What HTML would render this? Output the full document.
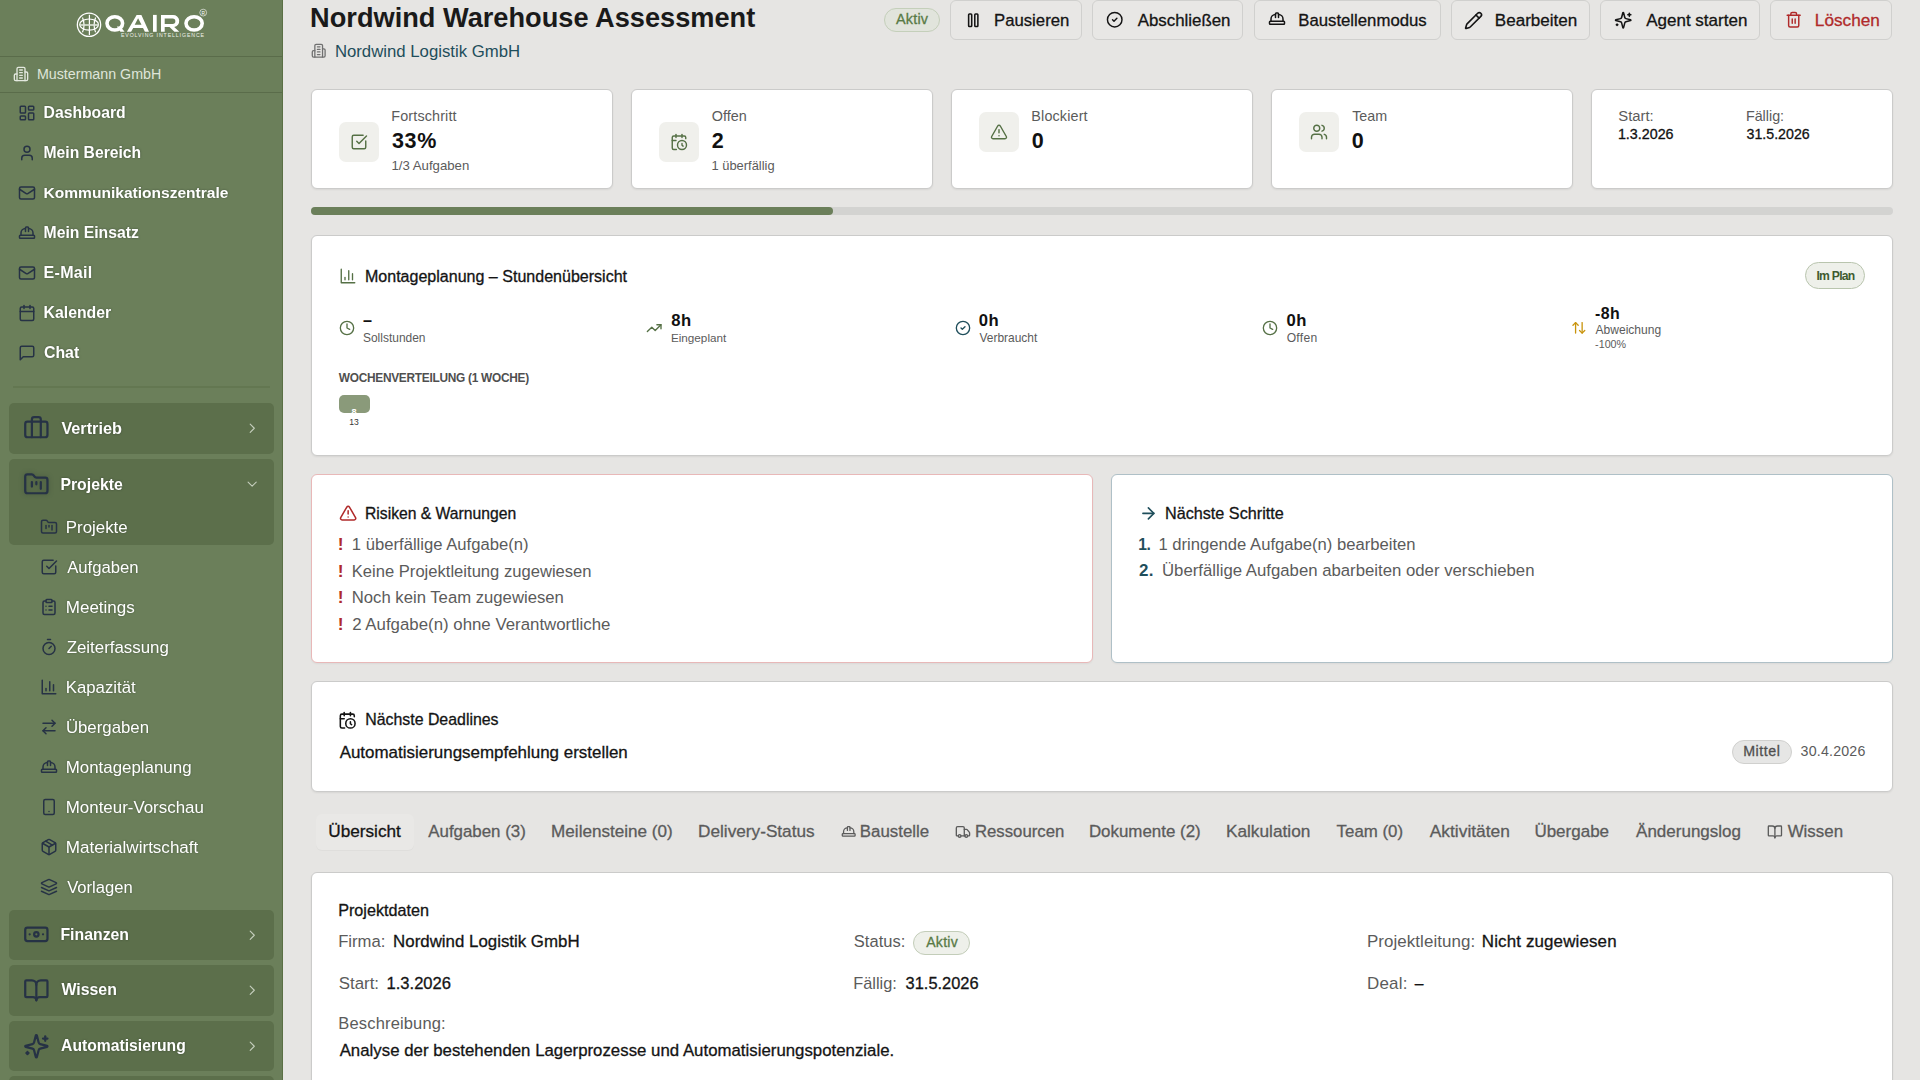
<!DOCTYPE html><html><head><meta charset="utf-8"><style>
html,body{margin:0;padding:0;width:1920px;height:1080px;overflow:hidden;background:#e6e5e3;font-family:"Liberation Sans",sans-serif;}
.t{position:absolute;white-space:nowrap;line-height:1;}
.b{position:absolute;box-sizing:border-box;}
.i{position:absolute;overflow:visible;}
</style></head><body>
<div class="b" style="left:0px;top:0px;width:283px;height:1080px;background:#6b7f5a;border-right:1px solid #5a7045;"></div>
<svg class="i" style="left:0;top:0" width="283" height="56" viewBox="0 0 283 56">
<g fill="none" stroke="#fff">
<circle cx="89" cy="24.7" r="11.65" stroke-width="1.3"/>
<ellipse cx="89.1" cy="24.6" rx="9.4" ry="5.6" stroke-width="1.2"/>
<path d="M89.4 14.8V35.1" stroke-width="1.2"/>
<path d="M82.5 17.4Q85.6 24.8 82.5 32.2" stroke-width="1.2"/>
<path d="M95.6 17.4Q92.6 24.8 95.6 32.2" stroke-width="1.2"/>
<path d="M79.6 25H98.8" stroke-width="1.6" stroke="#dfe5da"/>
</g>
<g fill="#fff">
<ellipse cx="114.8" cy="23.35" rx="7.8" ry="6.65" fill="none" stroke="#fff" stroke-width="3.6"/>
<path d="M116.8 26.6H120.4L124.6 31.8H120.4Z"/>
<path fill-rule="evenodd" d="M126.9 31.8L136.6 14.9H141.4L149 31.8H144.9L143 27.9H133.2L131.1 31.8ZM134.7 24.7H141.5L138.1 18.3Z"/>
<rect x="153" y="14.9" width="3.7" height="16.9"/>
<path fill-rule="evenodd" d="M161 31.8V14.9H172.9A6.1 6.1 0 0 1 174.2 27L179.3 31.8H174.4L169.5 27.1H164.7V31.8ZM164.7 18.5H172.6A2.75 2.75 0 0 1 172.6 24H164.7Z"/>
<ellipse cx="194.1" cy="23.35" rx="8.1" ry="6.65" fill="none" stroke="#fff" stroke-width="3.6"/>
</g>
<text x="120.9" y="36.9" font-family="Liberation Sans" font-size="5.2" fill="#eef2ea" textLength="83.1" lengthAdjust="spacing">EVOLVING INTELLIGENCE</text>
<circle cx="203.2" cy="12.6" r="3.4" fill="none" stroke="#fff" stroke-width="0.6"/>
<text x="201.5" y="14.5" font-family="Liberation Sans" font-size="4.8" fill="#fff">R</text>
</svg>
<div class="b" style="left:0px;top:56px;width:282px;height:1px;background:#5a6c4a;"></div>
<div class="b" style="left:0px;top:92px;width:282px;height:1px;background:#5a6c4a;"></div>
<svg class="i" style="left:13.00px;top:66.20px;" width="16.00" height="16.00" viewBox="0 0 24 24" fill="none" stroke="#e3e8de" stroke-width="2" stroke-linecap="round" stroke-linejoin="round"><path d="M6 22V4a2 2 0 0 1 2-2h8a2 2 0 0 1 2 2v18Z"/><path d="M6 12H4a2 2 0 0 0-2 2v6a2 2 0 0 0 2 2h2"/><path d="M18 9h2a2 2 0 0 1 2 2v9a2 2 0 0 1-2 2h-2"/><path d="M10 6h4"/><path d="M10 10h4"/><path d="M10 14h4"/><path d="M10 18h4"/></svg>
<svg class="i" style="left:17.50px;top:104.30px;" width="18.00" height="18.00" viewBox="0 0 24 24" fill="none" stroke="#263245" stroke-width="2" stroke-linecap="round" stroke-linejoin="round"><rect width="7" height="9" x="3" y="3" rx="1"/><rect width="7" height="5" x="14" y="3" rx="1"/><rect width="7" height="9" x="14" y="12" rx="1"/><rect width="7" height="5" x="3" y="16" rx="1"/></svg>
<svg class="i" style="left:17.50px;top:144.30px;" width="18.00" height="18.00" viewBox="0 0 24 24" fill="none" stroke="#263245" stroke-width="2" stroke-linecap="round" stroke-linejoin="round"><path d="M19 21v-2a4 4 0 0 0-4-4H9a4 4 0 0 0-4 4v2"/><circle cx="12" cy="7" r="4"/></svg>
<svg class="i" style="left:17.50px;top:184.30px;" width="18.00" height="18.00" viewBox="0 0 24 24" fill="none" stroke="#263245" stroke-width="2" stroke-linecap="round" stroke-linejoin="round"><rect width="20" height="16" x="2" y="4" rx="2"/><path d="m22 7-8.97 5.7a1.94 1.94 0 0 1-2.06 0L2 7"/></svg>
<svg class="i" style="left:17.50px;top:224.30px;" width="18.00" height="18.00" viewBox="0 0 24 24" fill="none" stroke="#263245" stroke-width="2" stroke-linecap="round" stroke-linejoin="round"><path d="M2 18a1 1 0 0 0 1 1h18a1 1 0 0 0 1-1v-2a1 1 0 0 0-1-1H3a1 1 0 0 0-1 1v2z"/><path d="M10 10V5a1 1 0 0 1 1-1h2a1 1 0 0 1 1 1v5"/><path d="M4 15v-3a6 6 0 0 1 6-6"/><path d="M14 6a6 6 0 0 1 6 6v3"/></svg>
<svg class="i" style="left:17.50px;top:264.30px;" width="18.00" height="18.00" viewBox="0 0 24 24" fill="none" stroke="#263245" stroke-width="2" stroke-linecap="round" stroke-linejoin="round"><rect width="20" height="16" x="2" y="4" rx="2"/><path d="m22 7-8.97 5.7a1.94 1.94 0 0 1-2.06 0L2 7"/></svg>
<svg class="i" style="left:17.50px;top:304.30px;" width="18.00" height="18.00" viewBox="0 0 24 24" fill="none" stroke="#263245" stroke-width="2" stroke-linecap="round" stroke-linejoin="round"><path d="M8 2v4"/><path d="M16 2v4"/><rect width="18" height="18" x="3" y="4" rx="2"/><path d="M3 10h18"/></svg>
<svg class="i" style="left:17.50px;top:344.30px;" width="18.00" height="18.00" viewBox="0 0 24 24" fill="none" stroke="#263245" stroke-width="2" stroke-linecap="round" stroke-linejoin="round"><path d="M21 15a2 2 0 0 1-2 2H7l-4 4V5a2 2 0 0 1 2-2h14a2 2 0 0 1 2 2z"/></svg>
<div class="b" style="left:13px;top:386px;width:257px;height:2px;background:#637751;"></div>
<div class="b" style="left:9px;top:403px;width:265px;height:50.5px;background:#5c6f4b;border-radius:5px;"></div>
<svg class="i" style="left:23.30px;top:414.95px;" width="26.70" height="26.70" viewBox="0 0 24 24" fill="none" stroke="#263245" stroke-width="2" stroke-linecap="round" stroke-linejoin="round"><path d="M16 20V4a2 2 0 0 0-2-2h-4a2 2 0 0 0-2 2v16"/><rect width="20" height="14" x="2" y="6" rx="2"/></svg>
<svg class="i" style="left:244.00px;top:420.05px;" width="16.50" height="16.50" viewBox="0 0 24 24" fill="none" stroke="#c5cebd" stroke-width="1.6" stroke-linecap="round" stroke-linejoin="round"><path d="m9 18 6-6-6-6"/></svg>
<div class="b" style="left:9px;top:459px;width:265px;height:50.4px;background:#5c6f4b;border-radius:5px 5px 0 0;"></div>
<svg class="i" style="left:23.30px;top:470.95px;filter:drop-shadow(0 0 2.5px rgba(40,55,45,.45));" width="26.70" height="26.70" viewBox="0 0 24 24" fill="none" stroke="#263245" stroke-width="2" stroke-linecap="round" stroke-linejoin="round"><path d="M4 20h16a2 2 0 0 0 2-2V8a2 2 0 0 0-2-2h-7.93a2 2 0 0 1-1.66-.9l-.82-1.2A2 2 0 0 0 7.93 3H4a2 2 0 0 0-2 2v13c0 1.1.9 2 2 2Z"/><path d="M8 10v4"/><path d="M12 10v2"/><path d="M16 10v6"/></svg>
<svg class="i" style="left:244.30px;top:475.90px;" width="16.30" height="16.30" viewBox="0 0 24 24" fill="none" stroke="#c5cebd" stroke-width="1.6" stroke-linecap="round" stroke-linejoin="round"><path d="m6 9 6 6 6-6"/></svg>
<div class="b" style="left:9px;top:509.4px;width:265px;height:35.3px;background:#5c6f4b;border-radius:0 0 5px 5px;"></div>
<svg class="i" style="left:40.00px;top:518.30px;" width="18.00" height="18.00" viewBox="0 0 24 24" fill="none" stroke="#263245" stroke-width="2" stroke-linecap="round" stroke-linejoin="round"><path d="M4 20h16a2 2 0 0 0 2-2V8a2 2 0 0 0-2-2h-7.93a2 2 0 0 1-1.66-.9l-.82-1.2A2 2 0 0 0 7.93 3H4a2 2 0 0 0-2 2v13c0 1.1.9 2 2 2Z"/><path d="M8 10v4"/><path d="M12 10v2"/><path d="M16 10v6"/></svg>
<svg class="i" style="left:40.00px;top:558.30px;" width="18.00" height="18.00" viewBox="0 0 24 24" fill="none" stroke="#263245" stroke-width="2" stroke-linecap="round" stroke-linejoin="round"><path d="M21 10.5V19a2 2 0 0 1-2 2H5a2 2 0 0 1-2-2V5a2 2 0 0 1 2-2h12.5"/><path d="m9 11 3 3L22 4"/></svg>
<svg class="i" style="left:40.00px;top:598.30px;" width="18.00" height="18.00" viewBox="0 0 24 24" fill="none" stroke="#263245" stroke-width="2" stroke-linecap="round" stroke-linejoin="round"><rect width="8" height="4" x="8" y="2" rx="1" ry="1"/><path d="M16 4h2a2 2 0 0 1 2 2v14a2 2 0 0 1-2 2H6a2 2 0 0 1-2-2V6a2 2 0 0 1 2-2h2"/><path d="M12 11h4"/><path d="M12 16h4"/><path d="M8 11h.01"/><path d="M8 16h.01"/></svg>
<svg class="i" style="left:40.00px;top:638.30px;" width="18.00" height="18.00" viewBox="0 0 24 24" fill="none" stroke="#263245" stroke-width="2" stroke-linecap="round" stroke-linejoin="round"><line x1="10" x2="14" y1="2" y2="2"/><line x1="12" x2="15" y1="14" y2="11"/><circle cx="12" cy="14" r="8"/></svg>
<svg class="i" style="left:40.00px;top:678.30px;" width="18.00" height="18.00" viewBox="0 0 24 24" fill="none" stroke="#263245" stroke-width="2" stroke-linecap="round" stroke-linejoin="round"><path d="M3 3v18h18"/><path d="M18 17V9"/><path d="M13 17V5"/><path d="M8 17v-3"/></svg>
<svg class="i" style="left:40.00px;top:718.30px;" width="18.00" height="18.00" viewBox="0 0 24 24" fill="none" stroke="#263245" stroke-width="2" stroke-linecap="round" stroke-linejoin="round"><path d="m16 3 4 4-4 4"/><path d="M20 7H4"/><path d="m8 21-4-4 4-4"/><path d="M4 17h16"/></svg>
<svg class="i" style="left:40.00px;top:758.30px;" width="18.00" height="18.00" viewBox="0 0 24 24" fill="none" stroke="#263245" stroke-width="2" stroke-linecap="round" stroke-linejoin="round"><path d="M2 18a1 1 0 0 0 1 1h18a1 1 0 0 0 1-1v-2a1 1 0 0 0-1-1H3a1 1 0 0 0-1 1v2z"/><path d="M10 10V5a1 1 0 0 1 1-1h2a1 1 0 0 1 1 1v5"/><path d="M4 15v-3a6 6 0 0 1 6-6"/><path d="M14 6a6 6 0 0 1 6 6v3"/></svg>
<svg class="i" style="left:40.00px;top:798.30px;" width="18.00" height="18.00" viewBox="0 0 24 24" fill="none" stroke="#263245" stroke-width="2" stroke-linecap="round" stroke-linejoin="round"><rect width="14" height="20" x="5" y="2" rx="2" ry="2"/><path d="M12 18h.01"/></svg>
<svg class="i" style="left:40.00px;top:838.30px;" width="18.00" height="18.00" viewBox="0 0 24 24" fill="none" stroke="#263245" stroke-width="2" stroke-linecap="round" stroke-linejoin="round"><path d="m7.5 4.27 9 5.15"/><path d="M21 8a2 2 0 0 0-1-1.73l-7-4a2 2 0 0 0-2 0l-7 4A2 2 0 0 0 3 8v8a2 2 0 0 0 1 1.73l7 4a2 2 0 0 0 2 0l7-4A2 2 0 0 0 21 16Z"/><path d="m3.3 7 8.7 5 8.7-5"/><path d="M12 22V12"/></svg>
<svg class="i" style="left:40.00px;top:878.30px;" width="18.00" height="18.00" viewBox="0 0 24 24" fill="none" stroke="#263245" stroke-width="2" stroke-linecap="round" stroke-linejoin="round"><path d="m12.83 2.18a2 2 0 0 0-1.66 0L2.6 6.08a1 1 0 0 0 0 1.83l8.58 3.91a2 2 0 0 0 1.66 0l8.58-3.9a1 1 0 0 0 0-1.83Z"/><path d="m22 17.65-9.17 4.16a2 2 0 0 1-1.66 0L2 17.65"/><path d="m22 12.65-9.17 4.16a2 2 0 0 1-1.66 0L2 12.65"/></svg>
<div class="b" style="left:9px;top:909.5px;width:265px;height:50.7px;background:#5c6f4b;border-radius:5px;"></div>
<svg class="i" style="left:23.30px;top:921.45px;" width="26.70" height="26.70" viewBox="0 0 24 24" fill="none" stroke="#263245" stroke-width="2" stroke-linecap="round" stroke-linejoin="round"><rect width="20" height="12" x="2" y="6" rx="2"/><circle cx="12" cy="12" r="2"/><path d="M6 12h.01M18 12h.01"/></svg>
<svg class="i" style="left:244.00px;top:926.55px;" width="16.50" height="16.50" viewBox="0 0 24 24" fill="none" stroke="#c5cebd" stroke-width="1.6" stroke-linecap="round" stroke-linejoin="round"><path d="m9 18 6-6-6-6"/></svg>
<div class="b" style="left:9px;top:965.3px;width:265px;height:50.5px;background:#5c6f4b;border-radius:5px;"></div>
<svg class="i" style="left:23.30px;top:977.25px;" width="26.70" height="26.70" viewBox="0 0 24 24" fill="none" stroke="#263245" stroke-width="2" stroke-linecap="round" stroke-linejoin="round"><path d="M12 7v14"/><path d="M3 18a1 1 0 0 1-1-1V4a1 1 0 0 1 1-1h5a4 4 0 0 1 4 4 4 4 0 0 1 4-4h5a1 1 0 0 1 1 1v13a1 1 0 0 1-1 1h-6a3 3 0 0 0-3 3 3 3 0 0 0-3-3z"/></svg>
<svg class="i" style="left:244.00px;top:982.35px;" width="16.50" height="16.50" viewBox="0 0 24 24" fill="none" stroke="#c5cebd" stroke-width="1.6" stroke-linecap="round" stroke-linejoin="round"><path d="m9 18 6-6-6-6"/></svg>
<div class="b" style="left:9px;top:1020.9px;width:265px;height:50.3px;background:#5c6f4b;border-radius:5px;"></div>
<svg class="i" style="left:23.30px;top:1032.85px;" width="26.70" height="26.70" viewBox="0 0 24 24" fill="none" stroke="#263245" stroke-width="2" stroke-linecap="round" stroke-linejoin="round"><path d="M9.937 15.5A2 2 0 0 0 8.5 14.063l-6.135-1.582a.5.5 0 0 1 0-.962L8.5 9.936A2 2 0 0 0 9.937 8.5l1.582-6.135a.5.5 0 0 1 .963 0L14.063 8.5A2 2 0 0 0 15.5 9.937l6.135 1.581a.5.5 0 0 1 0 .964L15.5 14.063a2 2 0 0 0-1.437 1.437l-1.582 6.135a.5.5 0 0 1-.963 0z"/><path d="M20 3v4"/><path d="M22 5h-4"/><path d="M4 17v2"/><path d="M5 18H3"/></svg>
<svg class="i" style="left:244.00px;top:1037.95px;" width="16.50" height="16.50" viewBox="0 0 24 24" fill="none" stroke="#c5cebd" stroke-width="1.6" stroke-linecap="round" stroke-linejoin="round"><path d="m9 18 6-6-6-6"/></svg>
<div class="b" style="left:9px;top:1076.3px;width:265px;height:30px;background:#5c6f4b;border-radius:5px;"></div>
<svg class="i" style="left:311.25px;top:43.10px;" width="15.40" height="15.40" viewBox="0 0 24 24" fill="none" stroke="#707070" stroke-width="2" stroke-linecap="round" stroke-linejoin="round"><path d="M6 22V4a2 2 0 0 1 2-2h8a2 2 0 0 1 2 2v18Z"/><path d="M6 12H4a2 2 0 0 0-2 2v6a2 2 0 0 0 2 2h2"/><path d="M18 9h2a2 2 0 0 1 2 2v9a2 2 0 0 1-2 2h-2"/><path d="M10 6h4"/><path d="M10 10h4"/><path d="M10 14h4"/><path d="M10 18h4"/></svg>
<div class="b" style="left:884px;top:8px;width:56px;height:24px;background:#e1e4dc;border:1px solid #c4cfba;border-radius:12px;"></div>
<div class="b" style="left:950px;top:0px;width:132px;height:40px;background:#e8e7e5;border:1px solid #d0d0ce;border-radius:6px;"></div>
<svg class="i" style="left:963.64px;top:10.59px;" width="18.51" height="18.51" viewBox="0 0 24 24" fill="none" stroke="#141414" stroke-width="2" stroke-linecap="round" stroke-linejoin="round"><rect x="14" y="4" width="4" height="16" rx="1"/><rect x="6" y="4" width="4" height="16" rx="1"/></svg>
<div class="b" style="left:1092px;top:0px;width:151px;height:40px;background:#e8e7e5;border:1px solid #d0d0ce;border-radius:6px;"></div>
<svg class="i" style="left:1106.27px;top:11.27px;" width="17.45" height="17.45" viewBox="0 0 24 24" fill="none" stroke="#141414" stroke-width="2" stroke-linecap="round" stroke-linejoin="round"><circle cx="12" cy="12" r="10"/><path d="m9 12 2 2 4-4"/></svg>
<div class="b" style="left:1254px;top:0px;width:187px;height:40px;background:#e8e7e5;border:1px solid #d0d0ce;border-radius:6px;"></div>
<svg class="i" style="left:1267.65px;top:10.25px;" width="18.00" height="18.00" viewBox="0 0 24 24" fill="none" stroke="#141414" stroke-width="2" stroke-linecap="round" stroke-linejoin="round"><path d="M2 18a1 1 0 0 0 1 1h18a1 1 0 0 0 1-1v-2a1 1 0 0 0-1-1H3a1 1 0 0 0-1 1v2z"/><path d="M10 10V5a1 1 0 0 1 1-1h2a1 1 0 0 1 1 1v5"/><path d="M4 15v-3a6 6 0 0 1 6-6"/><path d="M14 6a6 6 0 0 1 6 6v3"/></svg>
<div class="b" style="left:1451px;top:0px;width:139px;height:40px;background:#e8e7e5;border:1px solid #d0d0ce;border-radius:6px;"></div>
<svg class="i" style="left:1464.20px;top:11.20px;" width="19.09" height="19.09" viewBox="0 0 24 24" fill="none" stroke="#141414" stroke-width="2" stroke-linecap="round" stroke-linejoin="round"><path d="M21.174 6.812a1 1 0 0 0-3.986-3.987L3.842 16.174a2 2 0 0 0-.5.83l-1.321 4.352a.5.5 0 0 0 .623.622l4.353-1.32a2 2 0 0 0 .83-.497z"/><path d="m15 5 4 4"/></svg>
<div class="b" style="left:1600px;top:0px;width:160px;height:40px;background:#e8e7e5;border:1px solid #d0d0ce;border-radius:6px;"></div>
<svg class="i" style="left:1614.05px;top:10.90px;" width="18.42" height="18.42" viewBox="0 0 24 24" fill="none" stroke="#141414" stroke-width="2" stroke-linecap="round" stroke-linejoin="round"><path d="M9.937 15.5A2 2 0 0 0 8.5 14.063l-6.135-1.582a.5.5 0 0 1 0-.962L8.5 9.936A2 2 0 0 0 9.937 8.5l1.582-6.135a.5.5 0 0 1 .963 0L14.063 8.5A2 2 0 0 0 15.5 9.937l6.135 1.581a.5.5 0 0 1 0 .964L15.5 14.063a2 2 0 0 0-1.437 1.437l-1.582 6.135a.5.5 0 0 1-.963 0z"/><path d="M20 3v4"/><path d="M22 5h-4"/><path d="M4 17v2"/><path d="M5 18H3"/></svg>
<div class="b" style="left:1770px;top:0px;width:122px;height:40px;background:#e8e7e5;border:1px solid #d0d0ce;border-radius:6px;"></div>
<svg class="i" style="left:1784.55px;top:11.28px;" width="17.40" height="17.40" viewBox="0 0 24 24" fill="none" stroke="#b02a2a" stroke-width="2" stroke-linecap="round" stroke-linejoin="round"><path d="M3 6h18"/><path d="M19 6v14c0 1-1 2-2 2H7c-1 0-2-1-2-2V6"/><path d="M8 6V4c0-1 1-2 2-2h4c1 0 2 1 2 2v2"/><line x1="10" x2="10" y1="11" y2="17"/><line x1="14" x2="14" y1="11" y2="17"/></svg>
<div class="b" style="left:311px;top:89px;width:302px;height:100px;background:#fff;border:1px solid #cbcbca;border-radius:6px;box-shadow:0 1px 2px rgba(0,0,0,.07);"></div>
<div class="b" style="left:339px;top:122px;width:40px;height:40px;background:#f0f0ec;border-radius:7px;"></div>
<svg class="i" style="left:350.00px;top:132.60px;" width="18.00" height="18.00" viewBox="0 0 24 24" fill="none" stroke="#557045" stroke-width="1.9" stroke-linecap="round" stroke-linejoin="round"><path d="M21 10.5V19a2 2 0 0 1-2 2H5a2 2 0 0 1-2-2V5a2 2 0 0 1 2-2h12.5"/><path d="m9 11 3 3L22 4"/></svg>
<div class="b" style="left:631px;top:89px;width:302px;height:100px;background:#fff;border:1px solid #cbcbca;border-radius:6px;box-shadow:0 1px 2px rgba(0,0,0,.07);"></div>
<div class="b" style="left:659px;top:122px;width:40px;height:40px;background:#f0f0ec;border-radius:7px;"></div>
<svg class="i" style="left:670.00px;top:132.60px;" width="18.00" height="18.00" viewBox="0 0 24 24" fill="none" stroke="#557045" stroke-width="1.9" stroke-linecap="round" stroke-linejoin="round"><path d="M21 7.5V6a2 2 0 0 0-2-2H5a2 2 0 0 0-2 2v14a2 2 0 0 0 2 2h3.5"/><path d="M16 2v4"/><path d="M8 2v4"/><path d="M3 10h5"/><path d="M17.5 17.5 16 16.3V14"/><circle cx="16" cy="16" r="6"/></svg>
<div class="b" style="left:951px;top:89px;width:302px;height:100px;background:#fff;border:1px solid #cbcbca;border-radius:6px;box-shadow:0 1px 2px rgba(0,0,0,.07);"></div>
<div class="b" style="left:979px;top:112px;width:40px;height:40px;background:#f0f0ec;border-radius:7px;"></div>
<svg class="i" style="left:990.00px;top:122.60px;" width="18.00" height="18.00" viewBox="0 0 24 24" fill="none" stroke="#557045" stroke-width="1.9" stroke-linecap="round" stroke-linejoin="round"><path d="m21.73 18-8-14a2 2 0 0 0-3.48 0l-8 14A2 2 0 0 0 4 21h16a2 2 0 0 0 1.73-3"/><path d="M12 9v4"/><path d="M12 17h.01"/></svg>
<div class="b" style="left:1271px;top:89px;width:302px;height:100px;background:#fff;border:1px solid #cbcbca;border-radius:6px;box-shadow:0 1px 2px rgba(0,0,0,.07);"></div>
<div class="b" style="left:1299px;top:112px;width:40px;height:40px;background:#f0f0ec;border-radius:7px;"></div>
<svg class="i" style="left:1310.00px;top:122.60px;" width="18.00" height="18.00" viewBox="0 0 24 24" fill="none" stroke="#557045" stroke-width="1.9" stroke-linecap="round" stroke-linejoin="round"><path d="M16 21v-2a4 4 0 0 0-4-4H6a4 4 0 0 0-4 4v2"/><circle cx="9" cy="7" r="4"/><path d="M22 21v-2a4 4 0 0 0-3-3.87"/><path d="M16 3.13a4 4 0 0 1 0 7.75"/></svg>
<div class="b" style="left:1591px;top:89px;width:302px;height:100px;background:#fff;border:1px solid #cbcbca;border-radius:6px;box-shadow:0 1px 2px rgba(0,0,0,.07);"></div>
<div class="b" style="left:311px;top:207px;width:1582px;height:8px;background:#d3d3d1;border-radius:4px;"></div>
<div class="b" style="left:311px;top:207px;width:522px;height:8px;background:#6b7f5a;border-radius:4px;"></div>
<div class="b" style="left:311px;top:235px;width:1582px;height:221px;background:#fff;border:1px solid #cbcbca;border-radius:6px;box-shadow:0 1px 2px rgba(0,0,0,.07);"></div>
<svg class="i" style="left:338.60px;top:266.90px;" width="18.00" height="18.00" viewBox="0 0 24 24" fill="none" stroke="#557045" stroke-width="1.8" stroke-linecap="round" stroke-linejoin="round"><path d="M3 3v18h18"/><path d="M18 17V9"/><path d="M13 17V5"/><path d="M8 17v-3"/></svg>
<div class="b" style="left:1804.5px;top:261.7px;width:60.4px;height:27.8px;background:#eef0ea;border:1px solid #b9c5ae;border-radius:14px;"></div>
<svg class="i" style="left:338.53px;top:320.30px;" width="16.00" height="16.00" viewBox="0 0 24 24" fill="none" stroke="#557045" stroke-width="2" stroke-linecap="round" stroke-linejoin="round"><circle cx="12" cy="12" r="10"/><polyline points="12 6 12 12 16 14"/></svg>
<svg class="i" style="left:646.32px;top:319.91px;" width="16.36" height="16.36" viewBox="0 0 24 24" fill="none" stroke="#557045" stroke-width="2" stroke-linecap="round" stroke-linejoin="round"><polyline points="22 7 13.5 15.5 8.5 10.5 2 17"/><polyline points="16 7 22 7 22 13"/></svg>
<svg class="i" style="left:954.83px;top:320.30px;" width="16.00" height="16.00" viewBox="0 0 24 24" fill="none" stroke="#1f4e5b" stroke-width="2" stroke-linecap="round" stroke-linejoin="round"><circle cx="12" cy="12" r="10"/><path d="m9 12 2 2 4-4"/></svg>
<svg class="i" style="left:1262.43px;top:320.30px;" width="16.00" height="16.00" viewBox="0 0 24 24" fill="none" stroke="#557045" stroke-width="2" stroke-linecap="round" stroke-linejoin="round"><circle cx="12" cy="12" r="10"/><polyline points="12 6 12 12 16 14"/></svg>
<svg class="i" style="left:1570.89px;top:319.94px;" width="15.72" height="15.72" viewBox="0 0 24 24" fill="none" stroke="#c9940c" stroke-width="2" stroke-linecap="round" stroke-linejoin="round"><path d="m21 16-4 4-4-4"/><path d="M17 20V4"/><path d="m3 8 4-4 4 4"/><path d="M7 4v16"/></svg>
<div class="b" style="left:339px;top:395px;width:31px;height:18px;background:#8a9a7a;border-radius:5px;"></div>
<div class="b" style="left:311px;top:474px;width:782px;height:189px;background:#fff;border:1px solid #e8b8b8;border-radius:6px;box-shadow:0 1px 2px rgba(0,0,0,.05);"></div>
<svg class="i" style="left:338.51px;top:504.05px;" width="18.28" height="18.28" viewBox="0 0 24 24" fill="none" stroke="#b02a2a" stroke-width="2" stroke-linecap="round" stroke-linejoin="round"><path d="m21.73 18-8-14a2 2 0 0 0-3.48 0l-8 14A2 2 0 0 0 4 21h16a2 2 0 0 0 1.73-3"/><path d="M12 9v4"/><path d="M12 17h.01"/></svg>
<div class="b" style="left:1111px;top:474px;width:782px;height:189px;background:#fff;border:1px solid #afc0c7;border-radius:6px;box-shadow:0 1px 2px rgba(0,0,0,.05);"></div>
<svg class="i" style="left:1138.58px;top:504.38px;" width="18.75" height="18.75" viewBox="0 0 24 24" fill="none" stroke="#1f4e5b" stroke-width="2" stroke-linecap="round" stroke-linejoin="round"><path d="M5 12h14"/><path d="m12 5 7 7-7 7"/></svg>
<div class="b" style="left:311px;top:681px;width:1582px;height:111px;background:#fff;border:1px solid #cbcbca;border-radius:6px;box-shadow:0 1px 2px rgba(0,0,0,.07);"></div>
<svg class="i" style="left:338.15px;top:710.82px;" width="18.63" height="18.63" viewBox="0 0 24 24" fill="none" stroke="#141414" stroke-width="2" stroke-linecap="round" stroke-linejoin="round"><path d="M21 7.5V6a2 2 0 0 0-2-2H5a2 2 0 0 0-2 2v14a2 2 0 0 0 2 2h3.5"/><path d="M16 2v4"/><path d="M8 2v4"/><path d="M3 10h5"/><path d="M17.5 17.5 16 16.3V14"/><circle cx="16" cy="16" r="6"/></svg>
<div class="b" style="left:1732px;top:739.7px;width:59.7px;height:24px;background:#e6e6e5;border:1px solid #d0d0ce;border-radius:12px;"></div>
<div class="b" style="left:315.8px;top:814.2px;width:98.6px;height:35.4px;background:#e9e8e6;border-radius:6px;box-shadow:0 1px 1px rgba(0,0,0,.03);"></div>
<svg class="i" style="left:841.06px;top:823.68px;" width="15.38" height="15.38" viewBox="0 0 24 24" fill="none" stroke="#5b5b5b" stroke-width="2" stroke-linecap="round" stroke-linejoin="round"><path d="M2 18a1 1 0 0 0 1 1h18a1 1 0 0 0 1-1v-2a1 1 0 0 0-1-1H3a1 1 0 0 0-1 1v2z"/><path d="M10 10V5a1 1 0 0 1 1-1h2a1 1 0 0 1 1 1v5"/><path d="M4 15v-3a6 6 0 0 1 6-6"/><path d="M14 6a6 6 0 0 1 6 6v3"/></svg>
<svg class="i" style="left:954.74px;top:823.81px;" width="15.93" height="15.93" viewBox="0 0 24 24" fill="none" stroke="#5b5b5b" stroke-width="2" stroke-linecap="round" stroke-linejoin="round"><path d="M14 18V6a2 2 0 0 0-2-2H4a2 2 0 0 0-2 2v11a1 1 0 0 0 1 1h2"/><path d="M15 18H9"/><path d="M19 18h2a1 1 0 0 0 1-1v-3.65a1 1 0 0 0-.22-.624l-3.48-4.35A1 1 0 0 0 17.52 8H14"/><circle cx="17" cy="18" r="2"/><circle cx="7" cy="18" r="2"/></svg>
<svg class="i" style="left:1767.04px;top:823.68px;" width="15.82" height="15.82" viewBox="0 0 24 24" fill="none" stroke="#5b5b5b" stroke-width="2" stroke-linecap="round" stroke-linejoin="round"><path d="M12 7v14"/><path d="M3 18a1 1 0 0 1-1-1V4a1 1 0 0 1 1-1h5a4 4 0 0 1 4 4 4 4 0 0 1 4-4h5a1 1 0 0 1 1 1v13a1 1 0 0 1-1 1h-6a3 3 0 0 0-3 3 3 3 0 0 0-3-3z"/></svg>
<div class="b" style="left:311px;top:872px;width:1582px;height:260px;background:#fff;border:1px solid #cbcbca;border-radius:6px;box-shadow:0 1px 2px rgba(0,0,0,.07);"></div>
<div class="b" style="left:913.3px;top:930.8px;width:56.7px;height:23.8px;background:#eef0ea;border:1px solid #c3cdb9;border-radius:12px;"></div>
<svg class="i" style="left:0;top:0" width="1920" height="1080" font-family="Liberation Sans"><text x="36.93" y="79.00" font-size="14.25" fill="#dfe5d9">Mustermann GmbH</text>
<text x="43.55" y="118.00" font-size="15.72" fill="#fff" font-weight="bold" style="filter:drop-shadow(0 0 1px rgba(30,40,30,.5));">Dashboard</text>
<text x="43.55" y="158.00" font-size="15.68" fill="#fff" font-weight="bold" style="filter:drop-shadow(0 0 1px rgba(30,40,30,.5));">Mein Bereich</text>
<text x="43.56" y="198.00" font-size="15.56" fill="#fff" font-weight="bold" style="filter:drop-shadow(0 0 1px rgba(30,40,30,.5));">Kommunikationszentrale</text>
<text x="43.55" y="238.00" font-size="15.72" fill="#fff" font-weight="bold" style="filter:drop-shadow(0 0 1px rgba(30,40,30,.5));">Mein Einsatz</text>
<text x="43.53" y="278.00" font-size="16.05" fill="#fff" letter-spacing="0.311" font-weight="bold" style="filter:drop-shadow(0 0 1px rgba(30,40,30,.5));">E-Mail</text>
<text x="43.54" y="318.00" font-size="15.82" fill="#fff" font-weight="bold" style="filter:drop-shadow(0 0 1px rgba(30,40,30,.5));">Kalender</text>
<text x="43.95" y="358.00" font-size="15.86" fill="#fff" font-weight="bold" style="filter:drop-shadow(0 0 1px rgba(30,40,30,.5));">Chat</text>
<text x="61.39" y="434.30" font-size="16.24" fill="#fff" font-weight="bold" style="filter:drop-shadow(0 0 1px rgba(30,40,30,.5));">Vertrieb</text>
<text x="60.44" y="489.80" font-size="15.79" fill="#fff" font-weight="bold" style="filter:drop-shadow(0 0 1px rgba(30,40,30,.5));">Projekte</text>
<text x="65.82" y="532.80" font-size="16.85" fill="#fff" style="filter:drop-shadow(0 0 0.8px rgba(30,40,30,.4));">Projekte</text>
<text x="67.17" y="572.80" font-size="16.70" fill="#fff" style="filter:drop-shadow(0 0 0.8px rgba(30,40,30,.4));">Aufgaben</text>
<text x="65.80" y="612.80" font-size="17.01" fill="#fff" style="filter:drop-shadow(0 0 0.8px rgba(30,40,30,.4));">Meetings</text>
<text x="66.67" y="652.80" font-size="16.86" fill="#fff" style="filter:drop-shadow(0 0 0.8px rgba(30,40,30,.4));">Zeiterfassung</text>
<text x="65.82" y="692.80" font-size="16.76" fill="#fff" style="filter:drop-shadow(0 0 0.8px rgba(30,40,30,.4));">Kapazität</text>
<text x="65.90" y="732.80" font-size="16.81" fill="#fff" style="filter:drop-shadow(0 0 0.8px rgba(30,40,30,.4));">Übergaben</text>
<text x="65.81" y="772.80" font-size="16.89" fill="#fff" style="filter:drop-shadow(0 0 0.8px rgba(30,40,30,.4));">Montageplanung</text>
<text x="65.81" y="812.80" font-size="16.90" fill="#fff" style="filter:drop-shadow(0 0 0.8px rgba(30,40,30,.4));">Monteur-Vorschau</text>
<text x="65.80" y="852.80" font-size="17.05" fill="#fff" style="filter:drop-shadow(0 0 0.8px rgba(30,40,30,.4));">Materialwirtschaft</text>
<text x="67.13" y="892.80" font-size="16.63" fill="#fff" style="filter:drop-shadow(0 0 0.8px rgba(30,40,30,.4));">Vorlagen</text>
<text x="60.44" y="940.40" font-size="15.84" fill="#fff" font-weight="bold" style="filter:drop-shadow(0 0 1px rgba(30,40,30,.5));">Finanzen</text>
<text x="61.48" y="995.40" font-size="15.86" fill="#fff" font-weight="bold" style="filter:drop-shadow(0 0 1px rgba(30,40,30,.5));">Wissen</text>
<text x="61.11" y="1051.40" font-size="15.69" fill="#fff" font-weight="bold" style="filter:drop-shadow(0 0 1px rgba(30,40,30,.5));">Automatisierung</text>
<text x="310.08" y="26.90" font-size="27.19" fill="#1a1a1a" font-weight="bold">Nordwind Warehouse Assessment</text>
<text x="334.88" y="56.90" font-size="16.75" fill="#1f4e5b">Nordwind Logistik GmbH</text>
<text x="895.97" y="24.00" font-size="14.38" fill="#587a45" letter-spacing="0.228" stroke="#587a45" stroke-width="0.3">Aktiv</text>
<text x="994.03" y="25.60" font-size="16.73" fill="#141414" stroke="#141414" stroke-width="0.3">Pausieren</text>
<text x="1137.67" y="25.60" font-size="16.87" fill="#141414" stroke="#141414" stroke-width="0.3">Abschließen</text>
<text x="1298.23" y="25.60" font-size="16.76" fill="#141414" stroke="#141414" stroke-width="0.3">Baustellenmodus</text>
<text x="1494.85" y="25.60" font-size="17.06" fill="#141414" stroke="#141414" stroke-width="0.3">Bearbeiten</text>
<text x="1646.22" y="25.60" font-size="17.00" fill="#141414" stroke="#141414" stroke-width="0.3">Agent starten</text>
<text x="1814.84" y="25.60" font-size="17.20" fill="#b02a2a" stroke="#b02a2a" stroke-width="0.3">Löschen</text>
<text x="391.32" y="120.80" font-size="14.38" fill="#5b5b5b" letter-spacing="0.136">Fortschritt</text>
<text x="392.01" y="147.90" font-size="21.50" fill="#111" letter-spacing="0.645" font-weight="bold">33%</text>
<text x="391.49" y="169.70" font-size="13.21" fill="#5b5b5b">1/3 Aufgaben</text>
<text x="711.82" y="120.80" font-size="14.38" fill="#5b5b5b">Offen</text>
<text x="711.75" y="147.90" font-size="21.50" fill="#111" font-weight="bold">2</text>
<text x="711.52" y="169.70" font-size="12.90" fill="#5b5b5b">1 überfällig</text>
<text x="1031.32" y="120.80" font-size="14.38" fill="#5b5b5b" letter-spacing="0.142">Blockiert</text>
<text x="1031.65" y="147.90" font-size="21.50" fill="#111" font-weight="bold">0</text>
<text x="1352.18" y="120.80" font-size="14.30" fill="#5b5b5b">Team</text>
<text x="1351.65" y="147.90" font-size="21.50" fill="#111" font-weight="bold">0</text>
<text x="1618.33" y="120.90" font-size="14.82" fill="#5b5b5b">Start:</text>
<text x="1617.91" y="139.00" font-size="14.31" fill="#111" stroke="#111" stroke-width="0.3">1.3.2026</text>
<text x="1745.93" y="120.90" font-size="14.31" fill="#5b5b5b">Fällig:</text>
<text x="1746.56" y="139.00" font-size="14.20" fill="#111" stroke="#111" stroke-width="0.3">31.5.2026</text>
<text x="364.98" y="281.70" font-size="16.04" fill="#141414" stroke="#141414" stroke-width="0.3">Montageplanung – Stundenübersicht</text>
<text x="1816.39" y="280.30" font-size="12.16" fill="#3f5b30" letter-spacing="-0.729" font-weight="bold">Im Plan</text>
<text x="363.01" y="326.25" font-size="16.16" fill="#111" font-weight="bold">–</text>
<text x="362.96" y="341.50" font-size="11.98" fill="#5b5b5b">Sollstunden</text>
<text x="671.37" y="326.25" font-size="16.65" fill="#111" letter-spacing="0.428" font-weight="bold">8h</text>
<text x="670.94" y="341.50" font-size="11.71" fill="#5b5b5b">Eingeplant</text>
<text x="978.84" y="326.25" font-size="16.65" fill="#111" letter-spacing="0.500" font-weight="bold">0h</text>
<text x="979.45" y="341.50" font-size="11.98" fill="#5b5b5b">Verbraucht</text>
<text x="1286.54" y="326.25" font-size="16.65" fill="#111" letter-spacing="0.500" font-weight="bold">0h</text>
<text x="1286.63" y="341.50" font-size="12.11" fill="#5b5b5b" letter-spacing="0.290">Offen</text>
<text x="1594.98" y="318.60" font-size="15.90" fill="#111" letter-spacing="0.477" font-weight="bold">-8h</text>
<text x="1595.58" y="333.90" font-size="12.04" fill="#5b5b5b">Abweichung</text>
<text x="1595.12" y="348.10" font-size="10.74" fill="#5b5b5b">-100%</text>
<text x="338.79" y="382.20" font-size="11.88" fill="#4f4f4f" letter-spacing="-0.276" font-weight="bold">WOCHENVERTEILUNG (1 WOCHE)</text>
<text x="351.51" y="414.60" font-size="9.20" fill="#fff" font-weight="bold">8</text>
<text x="349.35" y="425.00" font-size="8.57" fill="#333">13</text>
<text x="365.01" y="518.70" font-size="15.70" fill="#141414" stroke="#141414" stroke-width="0.3">Risiken &amp; Warnungen</text>
<text x="337.86" y="549.90" font-size="17.41" fill="#b02a2a" font-weight="bold">!</text>
<text x="351.83" y="549.90" font-size="16.65" fill="#5b5b5b">1 überfällige Aufgabe(n)</text>
<text x="337.86" y="576.57" font-size="17.41" fill="#b02a2a" font-weight="bold">!</text>
<text x="351.74" y="576.57" font-size="16.60" fill="#5b5b5b">Keine Projektleitung zugewiesen</text>
<text x="337.86" y="603.24" font-size="17.41" fill="#b02a2a" font-weight="bold">!</text>
<text x="351.73" y="603.24" font-size="16.71" fill="#5b5b5b">Noch kein Team zugewiesen</text>
<text x="337.86" y="629.91" font-size="17.41" fill="#b02a2a" font-weight="bold">!</text>
<text x="352.25" y="629.91" font-size="16.83" fill="#5b5b5b">2 Aufgabe(n) ohne Verantwortliche</text>
<text x="1164.97" y="518.70" font-size="16.19" fill="#141414" stroke="#141414" stroke-width="0.3">Nächste Schritte</text>
<text x="1138.21" y="549.70" font-size="15.65" fill="#1f4e5b" letter-spacing="-0.470" font-weight="bold">1.</text>
<text x="1158.43" y="549.70" font-size="16.65" fill="#5b5b5b">1 dringende Aufgabe(n) bearbeiten</text>
<text x="1139.11" y="575.80" font-size="16.95" fill="#1f4e5b" letter-spacing="0.115" font-weight="bold">2.</text>
<text x="1162.01" y="575.80" font-size="16.76" fill="#5b5b5b">Überfällige Aufgaben abarbeiten oder verschieben</text>
<text x="365.20" y="725.25" font-size="15.90" fill="#141414" stroke="#141414" stroke-width="0.3">Nächste Deadlines</text>
<text x="339.67" y="757.50" font-size="16.94" fill="#141414" stroke="#141414" stroke-width="0.3">Automatisierungsempfehlung erstellen</text>
<text x="1743.23" y="755.80" font-size="14.23" fill="#4f4f4f" letter-spacing="0.524" stroke="#4f4f4f" stroke-width="0.3">Mittel</text>
<text x="1800.56" y="755.80" font-size="14.23" fill="#5b5b5b" letter-spacing="0.195">30.4.2026</text>
<text x="328.27" y="837.00" font-size="17.20" fill="#141414" stroke="#141414" stroke-width="0.3">Übersicht</text>
<text x="428.27" y="837.00" font-size="16.88" fill="#5b5b5b" stroke="#5b5b5b" stroke-width="0.3">Aufgaben (3)</text>
<text x="551.10" y="837.00" font-size="17.10" fill="#5b5b5b" stroke="#5b5b5b" stroke-width="0.3">Meilensteine (0)</text>
<text x="698.09" y="837.00" font-size="17.19" fill="#5b5b5b" stroke="#5b5b5b" stroke-width="0.3">Delivery-Status</text>
<text x="859.82" y="837.00" font-size="16.85" fill="#5b5b5b" stroke="#5b5b5b" stroke-width="0.3">Baustelle</text>
<text x="974.93" y="837.00" font-size="16.75" fill="#5b5b5b" stroke="#5b5b5b" stroke-width="0.3">Ressourcen</text>
<text x="1088.91" y="837.00" font-size="16.91" fill="#5b5b5b" stroke="#5b5b5b" stroke-width="0.3">Dokumente (2)</text>
<text x="1225.88" y="837.00" font-size="17.28" fill="#5b5b5b" stroke="#5b5b5b" stroke-width="0.3">Kalkulation</text>
<text x="1336.62" y="837.00" font-size="16.84" fill="#5b5b5b" stroke="#5b5b5b" stroke-width="0.3">Team (0)</text>
<text x="1429.77" y="837.00" font-size="17.38" fill="#5b5b5b" stroke="#5b5b5b" stroke-width="0.3">Aktivitäten</text>
<text x="1534.39" y="837.00" font-size="17.00" fill="#5b5b5b" stroke="#5b5b5b" stroke-width="0.3">Übergabe</text>
<text x="1636.07" y="837.00" font-size="17.00" fill="#5b5b5b" stroke="#5b5b5b" stroke-width="0.3">Änderungslog</text>
<text x="1787.63" y="837.00" font-size="16.92" fill="#5b5b5b" stroke="#5b5b5b" stroke-width="0.3">Wissen</text>
<text x="338.17" y="915.80" font-size="16.19" fill="#141414" stroke="#141414" stroke-width="0.3">Projektdaten</text>
<text x="338.13" y="947.00" font-size="16.66" fill="#5b5b5b">Firma:</text>
<text x="393.12" y="947.00" font-size="16.87" fill="#141414" stroke="#141414" stroke-width="0.3">Nordwind Logistik GmbH</text>
<text x="853.85" y="946.80" font-size="16.53" fill="#5b5b5b">Status:</text>
<text x="926.22" y="946.80" font-size="14.08" fill="#587a45" letter-spacing="0.242" stroke="#587a45" stroke-width="0.3">Aktiv</text>
<text x="1366.91" y="946.90" font-size="16.95" fill="#5b5b5b" letter-spacing="0.071">Projektleitung:</text>
<text x="1481.81" y="946.90" font-size="16.95" fill="#141414" letter-spacing="0.134" stroke="#141414" stroke-width="0.3">Nicht zugewiesen</text>
<text x="338.73" y="989.20" font-size="16.87" fill="#5b5b5b">Start:</text>
<text x="386.54" y="989.20" font-size="16.57" fill="#141414" stroke="#141414" stroke-width="0.3">1.3.2026</text>
<text x="853.26" y="988.75" font-size="16.36" fill="#5b5b5b">Fällig:</text>
<text x="905.62" y="988.75" font-size="16.42" fill="#141414" stroke="#141414" stroke-width="0.3">31.5.2026</text>
<text x="1366.91" y="988.75" font-size="16.95" fill="#5b5b5b" letter-spacing="0.239">Deal:</text>
<text x="1414.80" y="988.75" font-size="15.65" fill="#141414" stroke="#141414" stroke-width="0.3">–</text>
<text x="338.35" y="1029.20" font-size="16.50" fill="#5b5b5b" letter-spacing="0.156">Beschreibung:</text>
<text x="339.67" y="1055.80" font-size="16.80" fill="#141414" letter-spacing="0.020" stroke="#141414" stroke-width="0.3">Analyse der bestehenden Lagerprozesse und Automatisierungspotenziale.</text></svg>
</body></html>
